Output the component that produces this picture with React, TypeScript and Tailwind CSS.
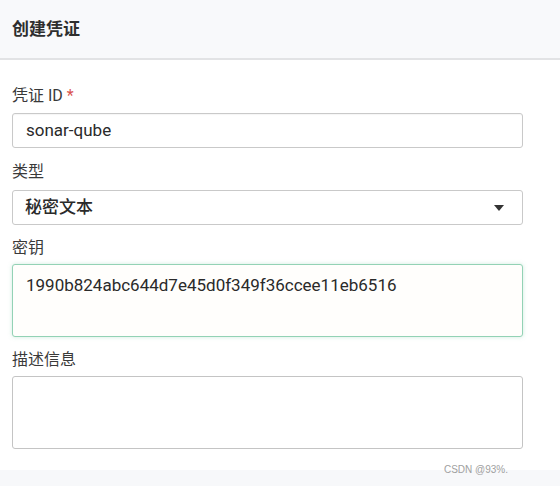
import React from "react";

const font = { fontFamily: 'Roboto, "Noto Sans CJK SC", sans-serif' };

export default function App() {
  return (
    <div className="w-[560px] h-[486px] bg-white flex flex-col overflow-hidden" style={font}>
      <div className="h-[60px] bg-[#f8f9fb] border-b-2 border-[#e2e3e5] flex items-center px-[12px] shrink-0">
        <span className="text-[17px] font-bold text-[#2e2e2e] leading-none">创建凭证</span>
      </div>
      <div className="flex flex-col w-[523px] pl-[12px] pt-[25px]">
        <label className="h-[22px] leading-[22px] text-[16px] text-[#3a3a3a] mb-[6px]">
          凭证 ID <span className="text-[#d9534f]">*</span>
        </label>
        <div className="h-[35px] border border-[#c9c9c9] rounded-[3px] flex items-center px-[13px] text-[17px] text-[#2a2a2a] shadow-[inset_0_1px_1px_rgba(0,0,0,0.04)]">
          sonar-qube
        </div>

        <label className="mt-[13px] h-[22px] leading-[22px] text-[16px] text-[#3a3a3a] mb-[7px]">类型</label>
        <div className="h-[35px] border border-[#c9c9c9] rounded-[3px] flex items-center justify-between pl-[12px] pr-[18px] text-[17px] font-medium text-[#2a2a2a]">
          <span>秘密文本</span>
          <svg width="10" height="6" viewBox="0 0 10 6">
            <path d="M0 0 L10 0 L5 6 Z" fill="#333" />
          </svg>
        </div>

        <label className="mt-[12px] h-[22px] leading-[22px] text-[16px] text-[#3a3a3a] mb-[5px]">密钥</label>
        <div className="h-[73px] border border-[#93d2b5] rounded-[3px] px-[13px] pt-[8px] text-[17px] leading-[24px] text-[#2a2a2a] bg-[#fffefc] shadow-[0_0_4px_rgba(120,200,160,0.35)]">
          1990b824abc644d7e45d0f349f36ccee11eb6516
        </div>

        <label className="mt-[12px] h-[22px] leading-[22px] text-[16px] text-[#3a3a3a] mb-[5px]">描述信息</label>
        <div className="h-[73px] border border-[#c4c4c4] rounded-[3px]" />
      </div>
      <div className="flex-1" />
      <div className="h-[16px] bg-[#f7f8fa] relative shrink-0">
        <span className="absolute right-[52px] top-[-5px] text-[10px] text-[#a0a0a0] leading-none" style={{ fontFamily: '"Liberation Sans", sans-serif' }}>
          CSDN @93%.
        </span>
      </div>
    </div>
  );
}
